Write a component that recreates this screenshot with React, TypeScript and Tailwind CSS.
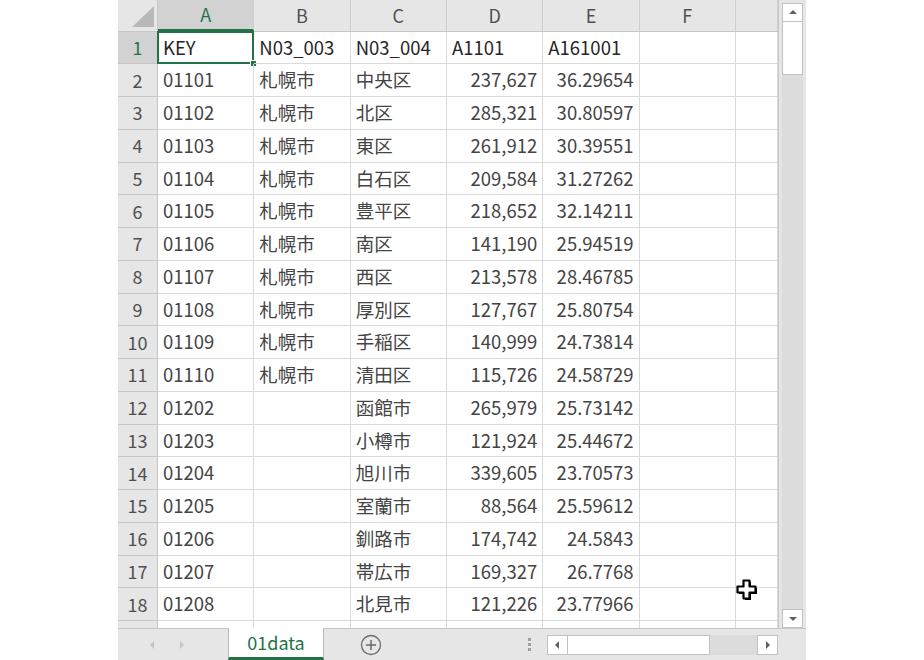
import React from 'react'

const data: string[][] = [
  ['KEY', 'N03_003', 'N03_004', 'A1101', 'A161001'],
  ['01101', '札幌市', '中央区', '237,627', '36.29654'],
  ['01102', '札幌市', '北区', '285,321', '30.80597'],
  ['01103', '札幌市', '東区', '261,912', '30.39551'],
  ['01104', '札幌市', '白石区', '209,584', '31.27262'],
  ['01105', '札幌市', '豊平区', '218,652', '32.14211'],
  ['01106', '札幌市', '南区', '141,190', '25.94519'],
  ['01107', '札幌市', '西区', '213,578', '28.46785'],
  ['01108', '札幌市', '厚別区', '127,767', '25.80754'],
  ['01109', '札幌市', '手稲区', '140,999', '24.73814'],
  ['01110', '札幌市', '清田区', '115,726', '24.58729'],
  ['01202', '', '函館市', '265,979', '25.73142'],
  ['01203', '', '小樽市', '121,924', '25.44672'],
  ['01204', '', '旭川市', '339,605', '23.70573'],
  ['01205', '', '室蘭市', '88,564', '25.59612'],
  ['01206', '', '釧路市', '174,742', '24.5843'],
  ['01207', '', '帯広市', '169,327', '26.7768'],
  ['01208', '', '北見市', '121,226', '23.77966'],
  ['01209', '', '夕張市', '8,843', '22.94021'],
]

const cols = ['A', 'B', 'C', 'D', 'E', 'F', '']

function PlusCursor() {
  return (
    <svg width="24" height="24" viewBox="0 0 24 24" className="absolute left-[617px] top-[578px]">
      <path d="M10 4h6v6h6v6h-6v6h-6v-6h-6v-6h6z" fill="#000" />
      <path
        d="M8.5 2.5h6v6h6v6h-6v6h-6v-6h-6v-6h6z"
        fill="#fff"
        stroke="#000"
        strokeWidth="2.2"
        strokeLinejoin="round"
      />
    </svg>
  )
}

function Arrow({ dir }: { dir: 'up' | 'down' | 'left' | 'right' }) {
  const pts = {
    up: '2,7 6,3 10,7',
    down: '2,4 6,8 10,4',
    left: '7,2 3,6 7,10',
    right: '4,2 8,6 4,10',
  }[dir]
  return (
    <svg width="12" height="12" viewBox="0 0 12 12">
      <polygon points={pts} fill="#606060" />
    </svg>
  )
}

export default function App() {
  return (
    <div className="w-[924px] h-[660px] bg-white flex justify-center overflow-hidden" style={{ fontFamily: '"Noto Sans CJK JP", "Noto Sans", sans-serif' }}>
      <div className="w-[688px] h-[660px] flex flex-col bg-[#e6e6e6]">
        <div className="flex h-[628px]">
          {/* grid */}
          <div className="relative w-[661px] h-[628px] overflow-hidden bg-white border-r border-[#c8c8c8]">
            {/* column headers */}
            <div className="grid grid-cols-[40px_repeat(6,96.33px)_1fr] h-[31.5px] bg-[#e6e6e6] border-b border-[#c6c6c6]">
              <div className="relative border-r border-[#c6c6c6]">
                <svg width="22" height="21" viewBox="0 0 22 21" className="absolute right-[3px] bottom-[4px]">
                  <polygon points="22,0 22,21 0,21" fill="#b9b9b9" />
                </svg>
              </div>
              {cols.map((c, i) => (
                <div
                  key={i}
                  className={
                    'flex items-center justify-center border-r border-[#d0d0d0] text-[18px] ' +
                    (i === 0 ? 'bg-[#d2d2d2] text-[#217346] border-b-2 border-b-[#217346]' : 'text-[#505050]')
                  }
                >
                  {c}
                </div>
              ))}
            </div>
            {/* rows */}
            {data.map((r, ri) => (
              <div key={ri} className="grid grid-cols-[40px_repeat(6,96.33px)_1fr] h-[32.75px]">
                <div
                  className={
                    'flex items-center justify-center border-r border-b border-[#c6c6c6] text-[18px] ' +
                    (ri === 0 ? 'bg-[#d2d2d2] text-[#217346]' : 'bg-[#e6e6e6] text-[#505050]')
                  }
                >
                  {ri + 1}
                </div>
                {[0, 1, 2, 3, 4, 5, 6].map((ci) => {
                  const v = r[ci] ?? ''
                  const num = ri > 0 && (ci === 3 || ci === 4)
                  return (
                    <div
                      key={ci}
                      className={
                        'relative flex items-center px-[5px] border-r border-b border-[#dadada] text-[18.5px] text-[#444] whitespace-nowrap ' +
                        (ri === 0 ? 'text-[#262626] ' : '') +
                        (num ? 'justify-end' : 'justify-start')
                      }
                    >
                      {v}
                      {ri === 0 && ci === 0 && (
                        <div className="absolute -left-[1px] -top-[1px] right-[-1px] bottom-[-1px] border-2 border-[#217346]">
                          <div className="absolute -right-[5px] -bottom-[5px] w-[7px] h-[7px] bg-[#217346] border border-white" />
                        </div>
                      )}
                    </div>
                  )
                })}
              </div>
            ))}
            <PlusCursor />
          </div>
          {/* vertical scrollbar */}
          <div className="w-[27px] h-[628px] flex flex-col items-start pl-[3px] pt-[3px] bg-[#e6e6e6]">
            <div className="w-[21px] h-[19px] bg-white border border-[#c2c2c2] flex items-center justify-center">
              <Arrow dir="up" />
            </div>
            <div className="w-[21px] h-[53px] bg-white border border-[#c2c2c2] border-t-0" />
            <div className="flex-1 w-[21px] bg-[#dcdcdc]" />
            <div className="w-[21px] h-[19px] bg-white border border-[#c2c2c2] flex items-center justify-center">
              <Arrow dir="down" />
            </div>
          </div>
        </div>
        {/* sheet tabs bar */}
        <div className="h-[32px] flex items-stretch bg-[#e6e6e6] border-t border-[#c6c6c6]">
          <div className="w-[110px] flex items-center pl-[28px] gap-[18px]">
            <svg width="12" height="12" viewBox="0 0 12 12">
              <polygon points="8,2 4,6 8,10" fill="#c4c4c4" />
            </svg>
            <svg width="12" height="12" viewBox="0 0 12 12">
              <polygon points="4,2 8,6 4,10" fill="#c4c4c4" />
            </svg>
          </div>
          <div className="w-[96px] -mt-[1px] bg-white border-l border-r border-[#b8b8b8] border-b-[3px] border-b-[#217346] flex items-center justify-center text-[18px] text-[#217346]">
            01data
          </div>
          <div className="w-[94px] flex items-center pl-[36px]">
            <svg width="22" height="22" viewBox="0 0 22 22">
              <circle cx="11" cy="11" r="9.5" fill="none" stroke="#6a6a6a" strokeWidth="1.3" />
              <path d="M11 6v10M6 11h10" stroke="#6a6a6a" strokeWidth="1.5" />
            </svg>
          </div>
          <div className="w-[129px] flex items-center justify-end pr-[16px]">
            <div className="flex flex-col gap-[2px]">
              <div className="w-[3px] h-[3px] bg-[#a0a0a0]" />
              <div className="w-[3px] h-[3px] bg-[#a0a0a0]" />
              <div className="w-[3px] h-[3px] bg-[#a0a0a0]" />
            </div>
          </div>
          <div className="flex items-center w-[231px]">
            <div className="w-[21px] h-[20px] bg-white border border-[#c2c2c2] flex items-center justify-center">
              <Arrow dir="left" />
            </div>
            <div className="w-[142px] h-[20px] bg-white border-y border-r border-[#c2c2c2]" />
            <div className="flex-1 h-[20px] bg-[#dcdcdc]" />
            <div className="w-[21px] h-[20px] bg-white border border-[#c2c2c2] flex items-center justify-center">
              <Arrow dir="right" />
            </div>
          </div>
        </div>
      </div>
    </div>
  )
}
